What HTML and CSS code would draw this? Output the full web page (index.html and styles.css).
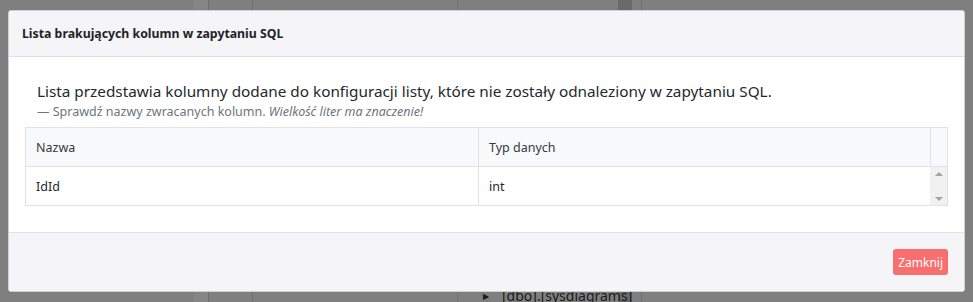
FILE: index.html
```html
<!DOCTYPE html>
<html lang="pl">
<head>
<meta charset="utf-8">
<title>Lista brakujących kolumn</title>
<link rel="stylesheet" href="styles.css">
</head>
<body>
<div class="backdrop">
  <div class="tree-item"><span class="caret">&#9654;</span><span>[dbo].[sysdiagrams]</span></div>
</div>
<div class="modal">
  <div class="modal-header">
    <h5 class="modal-title">Lista brakujących kolumn w zapytaniu SQL</h5>
  </div>
  <div class="modal-body">
    <div class="intro">
      <p class="lead">Lista przedstawia kolumny dodane do konfiguracji listy, które nie zostały odnaleziony w zapytaniu SQL.</p>
      <p class="note">— Sprawdź nazwy zwracanych kolumn. <em>Wielkość liter ma znaczenie!</em></p>
    </div>
    <div class="grid-table">
      <div class="th">Nazwa</div>
      <div class="th">Typ danych</div>
      <div class="th th-gutter"></div>
      <div class="td">IdId</div>
      <div class="td">int</div>
      <div class="scroll">
        <span class="arrow up"></span>
        <span class="arrow down"></span>
      </div>
    </div>
  </div>
  <div class="modal-footer">
    <button class="btn-close" type="button">Zamknij</button>
  </div>
</div>
</body>
</html>
```

FILE: styles.css
```css
html, body {
  margin: 0;
  padding: 0;
}
body {
  position: relative;
  height: 302px;
  overflow: hidden;
  background: #7f7f7f;
  font-family: "Noto Sans", "Open Sans", sans-serif;
  color: #212529;
  padding: 10px 8px 0 8px;
  box-sizing: border-box;
}
.backdrop {
  position: absolute;
  inset: 0;
  background:
    linear-gradient(to right,
      transparent 194px, #858585 194px, #858585 208px,
      #6e6e6e 208px, #6e6e6e 209px, transparent 209px,
      transparent 252px, #6e6e6e 252px, #6e6e6e 253px, transparent 253px,
      transparent 457px, #707070 457px, #707070 458px, transparent 458px,
      transparent 618px, #6a6a6a 618px, #6a6a6a 632px, transparent 632px,
      transparent 641px, #6e6e6e 641px, #6e6e6e 642px, transparent 642px);
}
.tree-item {
  position: absolute;
  left: 483px;
  top: 287px;
  font-family: "Noto Sans", sans-serif;
  font-size: 14px;
  line-height: 18px;
  color: #1a1a1a;
  display: flex;
  gap: 13px;
  align-items: center;
}
.caret {
  font-size: 8px;
}
.modal {
  position: relative;
  width: 957px;
  background: #fff;
  border: 1px solid #cfd0d2;
  border-radius: 3px;
  box-sizing: border-box;
  overflow: hidden;
}
.modal-header {
  background: #f5f5f7;
  border-bottom: 1px solid #dee0e3;
  height: 46px;
  box-sizing: border-box;
  display: flex;
  align-items: center;
  padding: 0 13px;
}
.modal-title {
  margin: 0;
  font-size: 12.3px;
  font-weight: 700;
  color: #1f2328;
}
.modal-body {
  padding: 22px 16px 26px 16px;
}
.intro {
  padding-left: 12px;
  margin-bottom: 7px;
}
.lead {
  margin: 0;
  font-size: 15.3px;
  line-height: 24px;
  color: #24282c;
}
.note {
  margin: 0;
  font-size: 12.5px;
  line-height: 17px;
  color: #6c757d;
}
.grid-table {
  display: grid;
  grid-template-columns: 1fr 1fr 17px;
  border: 1px solid #e0e2e5;
  font-size: 12.5px;
}
.th {
  background: #f8f9fa;
  height: 38px;
  border-bottom: 1px solid #e0e2e5;
  padding-left: 10px;
  display: flex;
  align-items: center;
  color: #343a40;
}
.th + .th {
  border-left: 1px solid #e0e2e5;
}
.th-gutter {
  padding: 0;
}
.td {
  height: 38px;
  padding-left: 10px;
  display: flex;
  align-items: center;
  color: #24282c;
}
.td + .td {
  border-left: 1px solid #e0e2e5;
}
.scroll {
  background: #f1f1f1;
  display: flex;
  flex-direction: column;
  justify-content: space-between;
  align-items: center;
  padding: 5px 0 4px;
}
.arrow {
  width: 0;
  height: 0;
  border-left: 4px solid transparent;
  border-right: 4px solid transparent;
}
.arrow.up {
  border-bottom: 4px solid #a3a3a3;
}
.arrow.down {
  border-top: 4px solid #a3a3a3;
}
.modal-footer {
  background: #f5f5f7;
  border-top: 1px solid #dee0e3;
  padding: 16px;
  display: flex;
  justify-content: flex-end;
}
.btn-close {
  height: 26px;
  padding: 0 5px;
  border: none;
  border-radius: 3px;
  background: #f96e6e;
  color: #fff;
  font-family: "Noto Sans", sans-serif;
  font-size: 12px;
}
```
